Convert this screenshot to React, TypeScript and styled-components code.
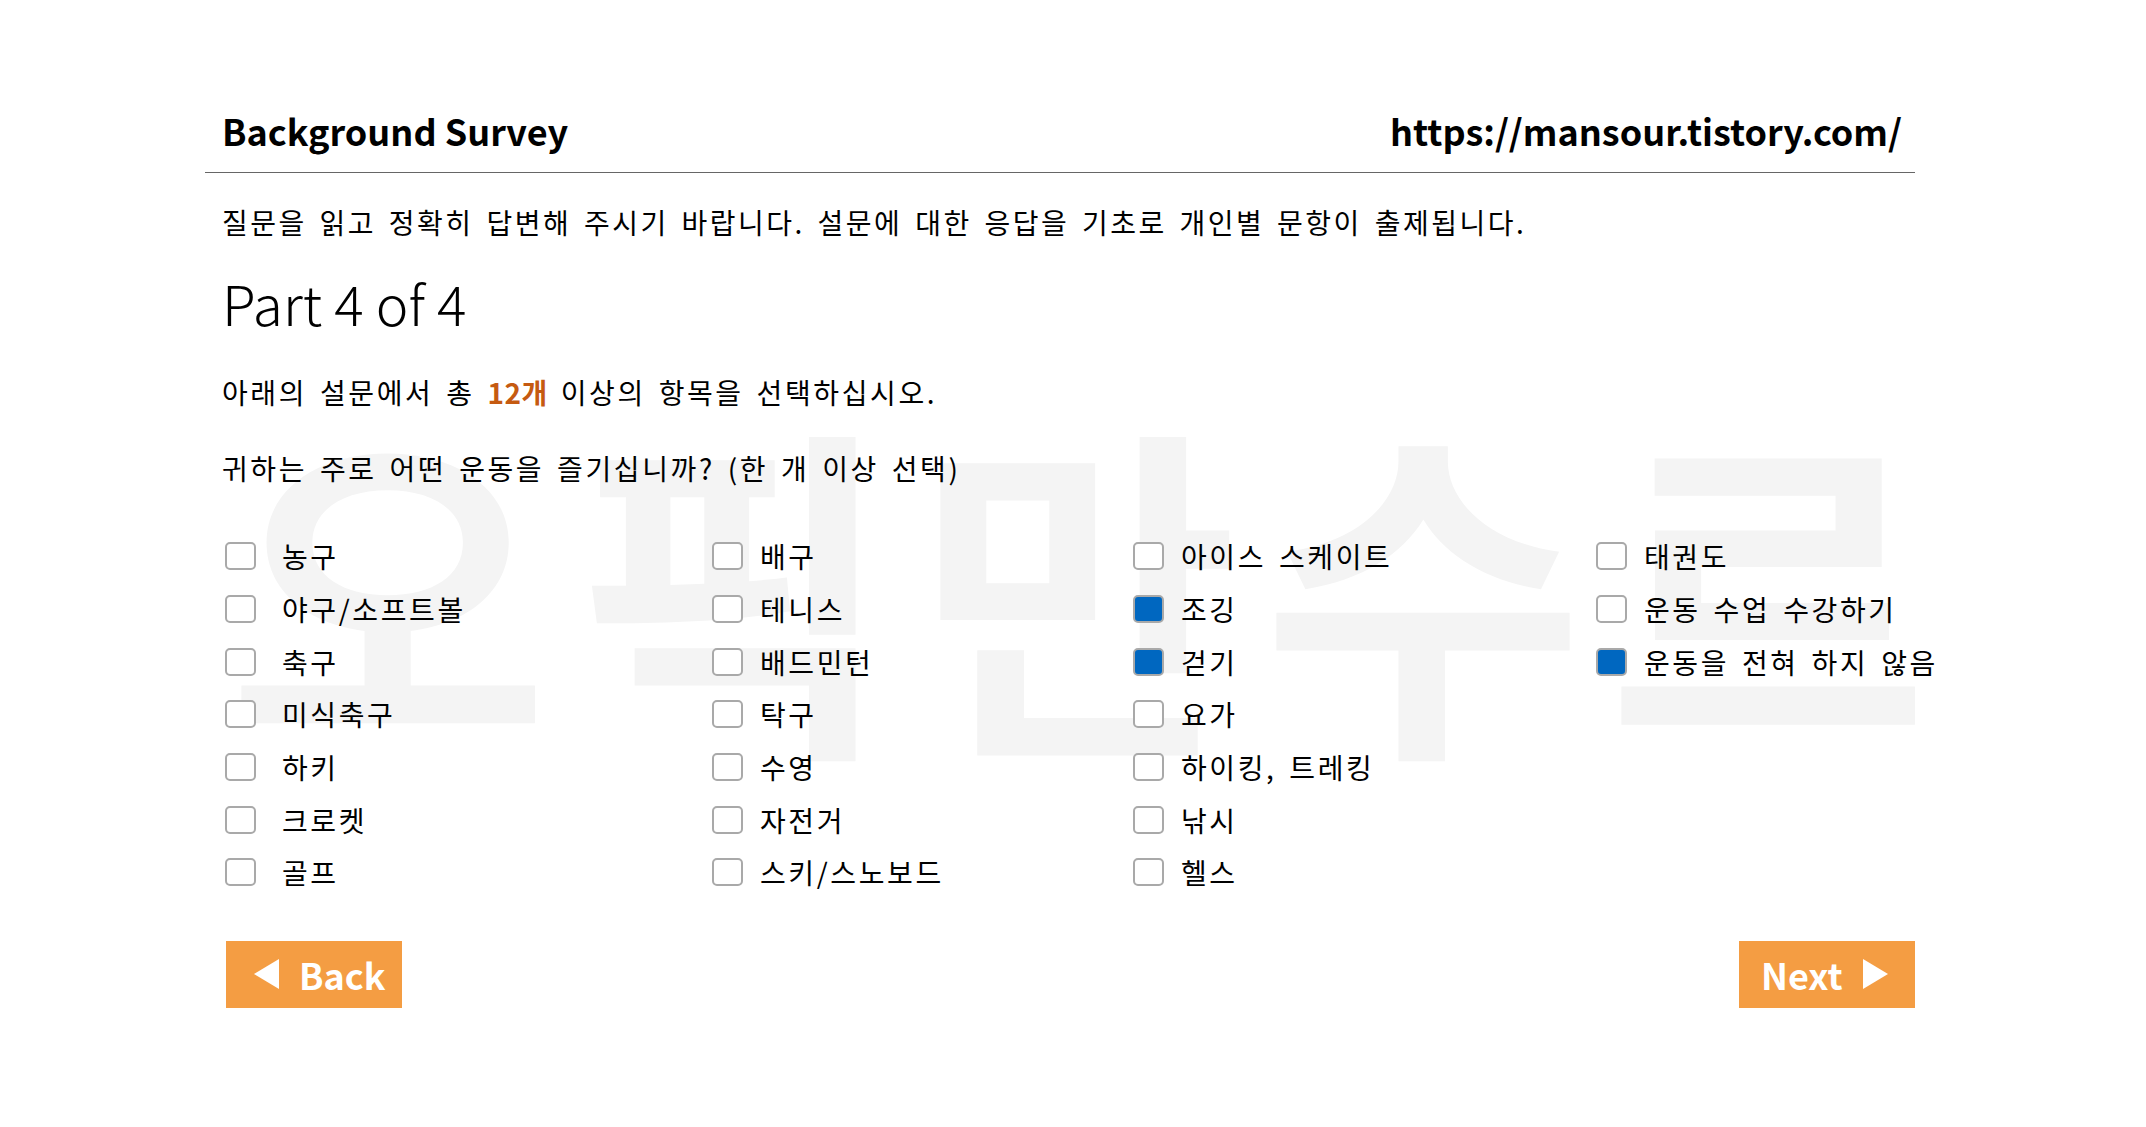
import React from "react";
import styled, { createGlobalStyle } from "styled-components";

const GlobalStyle = createGlobalStyle`
  html, body {
    margin: 0;
    padding: 0;
    background: #ffffff;
  }
  body {
    font-family: "Noto Sans CJK KR", "Noto Sans", sans-serif;
    color: #000;
  }
`;

const columns: { width: number; items: { label: string; checked?: boolean }[] }[] = [
  {
    width: 487,
    items: [
      { label: "농구" },
      { label: "야구/소프트볼" },
      { label: "축구" },
      { label: "미식축구" },
      { label: "하키" },
      { label: "크로켓" },
      { label: "골프" },
    ],
  },
  {
    width: 421,
    items: [
      { label: "배구" },
      { label: "테니스" },
      { label: "배드민턴" },
      { label: "탁구" },
      { label: "수영" },
      { label: "자전거" },
      { label: "스키/스노보드" },
    ],
  },
  {
    width: 463,
    items: [
      { label: "아이스 스케이트" },
      { label: "조깅", checked: true },
      { label: "걷기", checked: true },
      { label: "요가" },
      { label: "하이킹, 트레킹" },
      { label: "낚시" },
      { label: "헬스" },
    ],
  },
  {
    width: 320,
    items: [
      { label: "태권도" },
      { label: "운동 수업 수강하기" },
      { label: "운동을 전혀 하지 않음", checked: true },
    ],
  },
];

export default function App() {
  return (
    <>
      <GlobalStyle />
      <Page>
        <Card>
          <Watermark aria-hidden>오픽만수르</Watermark>
          <Content>
            <Header>
              <Title>Background Survey</Title>
              <Url>https://mansour.tistory.com/</Url>
            </Header>
            <Notice>
              질문을 읽고 정확히 답변해 주시기 바랍니다. 설문에 대한 응답을 기초로 개인별 문항이 출제됩니다.
            </Notice>
            <PartTitle>Part 4 of 4</PartTitle>
            <Question>
              아래의 설문에서 총 <Count>12개</Count> 이상의 항목을 선택하십시오.
            </Question>
            <Question $gap={42}>귀하는 주로 어떤 운동을 즐기십니까? (한 개 이상 선택)</Question>
            <Options>
              {columns.map((col, ci) => (
                <Column key={ci} $width={col.width}>
                  {col.items.map((item) => (
                    <Option key={item.label}>
                      <Box $checked={!!item.checked} />
                      <OptionLabel $wide={ci === 0}>{item.label}</OptionLabel>
                    </Option>
                  ))}
                </Column>
              ))}
            </Options>
            <Footer>
              <NavButton>
                <Arrow $dir="left" />
                <span>Back</span>
              </NavButton>
              <NavButton $next>
                <span>Next</span>
                <Arrow $dir="right" />
              </NavButton>
            </Footer>
          </Content>
        </Card>
      </Page>
    </>
  );
}

const Page = styled.div`
  width: 2146px;
  min-height: 1127px;
`;

const Card = styled.div`
  position: relative;
  margin-left: 205px;
  width: 1710px;
  padding-top: 106px;
`;

const Watermark = styled.div`
  position: absolute;
  left: 0;
  top: 403px;
  padding-left: 22px;
  font-size: 350px;
  line-height: 1;
  font-weight: 700;
  letter-spacing: 23px;
  color: #f4f4f4;
  white-space: nowrap;
  user-select: none;
  z-index: 0;
`;

const Content = styled.div`
  position: relative;
  z-index: 1;
`;

const Header = styled.div`
  display: flex;
  justify-content: space-between;
  align-items: baseline;
  padding: 0 13px 18px 17px;
  border-bottom: 1px solid #666;
`;

const Title = styled.div`
  font-size: 36px;
  line-height: 48px;
  font-weight: 700;
`;

const Url = styled(Title)``;

const Notice = styled.p`
  margin: 33px 0 0 17px;
  font-size: 28px;
  line-height: 32px;
  letter-spacing: 2.5px;
  word-spacing: 4px;
`;

const PartTitle = styled.h1`
  margin: 34px 0 0 17px;
  font-size: 55px;
  line-height: 60px;
  font-weight: 300;
`;

const Question = styled.p<{ $gap?: number }>`
  margin: ${(p) => p.$gap ?? 43}px 0 0 17px;
  font-size: 28px;
  line-height: 34px;
  letter-spacing: 2.6px;
  word-spacing: 4px;
`;

const Count = styled.b`
  color: #c55a11;
  font-weight: 700;
  letter-spacing: 0.5px;
`;

const Options = styled.div`
  display: flex;
  margin: 45px 0 0 20px;
`;

const Column = styled.div<{ $width: number }>`
  display: flex;
  flex-direction: column;
  width: ${(p) => p.$width}px;
  flex: none;
`;

const Option = styled.label`
  display: flex;
  align-items: center;
  height: 52.7px;
`;

const Box = styled.span<{ $checked: boolean }>`
  box-sizing: border-box;
  width: 31px;
  height: 28px;
  flex: none;
  border: 2px solid #a9a9a9;
  border-radius: 5px;
  background: ${(p) => (p.$checked ? "#0067c0" : "#fff")};
`;

const OptionLabel = styled.span<{ $wide: boolean }>`
  margin-left: ${(p) => (p.$wide ? 26 : 17)}px;
  font-size: 28px;
  letter-spacing: 2.6px;
  word-spacing: 4px;
  white-space: nowrap;
`;

const Footer = styled.div`
  display: flex;
  justify-content: space-between;
  margin: 42px 0 0 21px;
`;

const NavButton = styled.button<{ $next?: boolean }>`
  display: flex;
  align-items: center;
  gap: 20px;
  box-sizing: border-box;
  width: 176px;
  height: 67px;
  padding: ${(p) => (p.$next ? "0 0 0 22px" : "0 0 0 28px")};
  border: none;
  border-radius: 0;
  background: #f49d43;
  color: #fff;
  font-family: "Noto Sans CJK KR", "Noto Sans", sans-serif;
  font-size: 36px;
  font-weight: 700;
  cursor: pointer;
`;

const Arrow = styled.span<{ $dir: "left" | "right" }>`
  width: 0;
  height: 0;
  border-top: 15.5px solid transparent;
  border-bottom: 15.5px solid transparent;
  ${(p) =>
    p.$dir === "left"
      ? "border-right: 25px solid #fff;"
      : "border-left: 25px solid #fff;"}
`;
